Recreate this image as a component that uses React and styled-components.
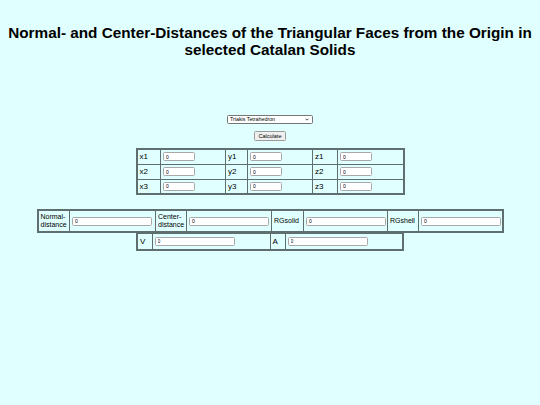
import React from "react";
import styled, { createGlobalStyle } from "styled-components";

const GlobalStyle = createGlobalStyle`
  html, body {
    margin: 0;
    padding: 0;
    background: #e0ffff;
  }
  body {
    font-family: "Liberation Sans", Arial, sans-serif;
    color: #000;
  }
`;

const solids = [
  "Triakis Tetrahedron",
  "Triakis Octahedron",
  "Tetrakis Hexahedron",
  "Disdyakis Dodecahedron",
  "Triakis Icosahedron",
  "Pentakis Dodecahedron",
  "Disdyakis Triacontahedron",
];

function App() {
  const [solid, setSolid] = React.useState(solids[0]);

  return (
    <Page>
      <GlobalStyle />
      <Title>
        Normal- and Center-Distances of the Triangular Faces from the Origin in
        selected Catalan Solids
      </Title>

      <Controls>
        <SelectWrap>
          <Select value={solid} onChange={(e) => setSolid(e.target.value)}>
            {solids.map((s) => (
              <option key={s}>{s}</option>
            ))}
          </Select>
          <Chevron viewBox="0 0 6 4" aria-hidden="true">
            <path d="M0.8 0.8 L3 3 L5.2 0.8" />
          </Chevron>
        </SelectWrap>
        <Button type="button">Calculate</Button>
      </Controls>

      <Grid $width={267}>
        <colgroup>
          <col style={{ width: 24 }} />
          <col style={{ width: 65 }} />
          <col style={{ width: 22 }} />
          <col style={{ width: 65 }} />
          <col style={{ width: 25 }} />
          <col style={{ width: 66 }} />
        </colgroup>
        <tbody>
          {[1, 2, 3].map((n) => (
            <Row key={n} $h={15}>
              <Label>x{n}</Label>
              <Cell><Field $w={32} defaultValue="0" /></Cell>
              <Label>y{n}</Label>
              <Cell><Field $w={32} defaultValue="0" /></Cell>
              <Label>z{n}</Label>
              <Cell><Field $w={32} defaultValue="0" /></Cell>
            </Row>
          ))}
        </tbody>
      </Grid>

      <Results>
        <Grid $width={465}>
          <colgroup>
            <col style={{ width: 32 }} />
            <col style={{ width: 86 }} />
            <col style={{ width: 31 }} />
            <col style={{ width: 85 }} />
            <col style={{ width: 32 }} />
            <col style={{ width: 84 }} />
            <col style={{ width: 31 }} />
            <col style={{ width: 84 }} />
          </colgroup>
          <tbody>
            <Row $h={22}>
              <Label $small>Normal-<br />distance</Label>
              <Cell><Field $w={80} defaultValue="0" /></Cell>
              <Label $small>Center-<br />distance</Label>
              <Cell><Field $w={80} defaultValue="0" /></Cell>
              <Label $small>RGsolid</Label>
              <Cell><Field $w={80} defaultValue="0" /></Cell>
              <Label $small>RGshell</Label>
              <Cell><Field $w={80} defaultValue="0" /></Cell>
            </Row>
          </tbody>
        </Grid>
        <Grid $width={266} $joined>
          <colgroup>
            <col style={{ width: 15 }} />
            <col style={{ width: 118 }} />
            <col style={{ width: 15 }} />
            <col style={{ width: 118 }} />
          </colgroup>
          <tbody>
            <Row $h={16}>
              <Label>V</Label>
              <Cell><Field $w={80} defaultValue="0" /></Cell>
              <Label>A</Label>
              <Cell><Field $w={80} defaultValue="0" /></Cell>
            </Row>
          </tbody>
        </Grid>
      </Results>
    </Page>
  );
}

const Page = styled.div`
  box-sizing: border-box;
  min-height: 405px;
  padding-top: 25px;
`;

const Title = styled.h1`
  margin: 0 4px;
  font-size: 15.3px;
  line-height: 16.5px;
  font-weight: bold;
  text-align: center;
`;

const Controls = styled.div`
  display: flex;
  flex-direction: column;
  align-items: center;
  gap: 7px;
  margin-top: 57px;
`;

const SelectWrap = styled.span`
  position: relative;
  display: block;
  height: 9px;
`;

const Select = styled.select`
  display: block;
  width: 86px;
  height: 9px;
  box-sizing: border-box;
  padding: 0 0 0 2px;
  border: 1px solid #767676;
  border-radius: 1.5px;
  background: #fff;
  appearance: none;
  font-family: "Liberation Sans", Arial, sans-serif;
  font-size: 5.3px;
  line-height: 7px;
  color: #000;
  outline: none;
`;

const Chevron = styled.svg`
  position: absolute;
  right: 4px;
  top: 3px;
  width: 4px;
  height: 3px;
  pointer-events: none;
  fill: none;
  stroke: #222;
  stroke-width: 1.2;
`;

const Button = styled.button`
  width: 32px;
  height: 10px;
  box-sizing: border-box;
  padding: 0;
  border: 1px solid #9a9a9a;
  border-radius: 1.5px;
  background: #efefef;
  font-family: "Liberation Sans", Arial, sans-serif;
  font-size: 5.5px;
  line-height: 8px;
  color: #000;
`;

const Grid = styled.table`
  width: ${(p) => p.$width}px;
  margin: ${(p) => (p.$joined ? "0 auto" : "7px auto 0")};
  table-layout: fixed;
  border-collapse: collapse;
  border: 2px solid #5f6f70;
  ${(p) => p.$joined && "border-top-width: 0;"}
`;

const Results = styled.div`
  margin-top: 14px;
`;

const Row = styled.tr`
  height: ${(p) => p.$h}px;
`;

const Cell = styled.td`
  padding: 0 2px;
  border: 1.5px solid #5f6f70;
  vertical-align: middle;
`;

const Label = styled(Cell)`
  font-size: ${(p) => (p.$small ? "7px" : "8px")};
  line-height: ${(p) => (p.$small ? "8px" : "9px")};
  white-space: nowrap;
`;

const Field = styled.input`
  display: block;
  width: ${(p) => p.$w}px;
  height: 9px;
  box-sizing: border-box;
  margin: 0;
  padding: 0 0 0 2px;
  border: 1px solid #a8a8a8;
  border-radius: 1.5px;
  background: #fff;
  font-family: "Liberation Sans", Arial, sans-serif;
  font-size: 5px;
  line-height: 7px;
  color: #000;
  outline: none;
`;

export default App;
